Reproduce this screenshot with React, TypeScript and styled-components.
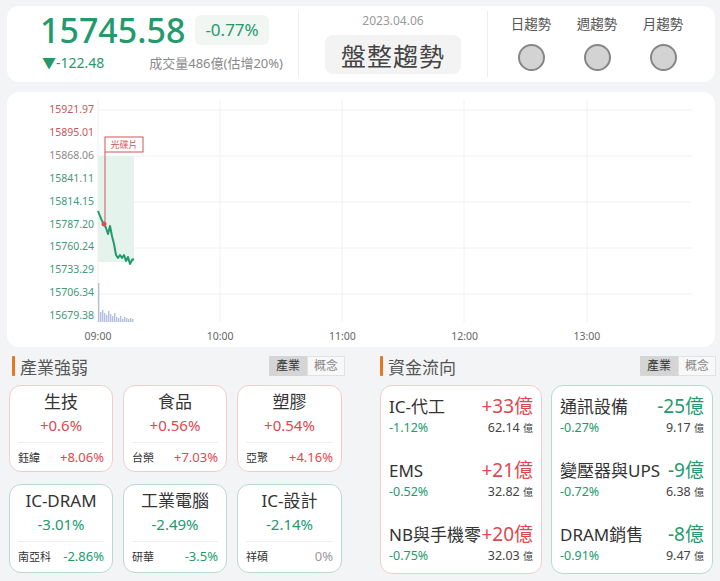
import React from "react";
import styled, { createGlobalStyle } from "styled-components";

const RED = "#e0474f";
const GREEN = "#239a6c";
const GRAY = "#8a8a8a";

const GlobalStyle = createGlobalStyle`
  html, body { margin: 0; padding: 0; background: #f3f4f6; }
  body {
    font-family: "Noto Sans", "Noto Sans CJK TC", sans-serif;
    color: #333;
  }
  * { box-sizing: border-box; }
`;

const Page = styled.div`
  width: 720px;
  height: 581px;
  overflow: hidden;
  padding: 6px 5px 0 7px;
  display: flex;
  flex-direction: column;
  gap: 10px;
`;

const Card = styled.div`
  background: #fff;
  border-radius: 12px;
`;

/* ---------- top summary ---------- */

const Summary = styled(Card)`
  height: 76px;
  display: grid;
  grid-template-columns: 292px 189px 1fr;
  align-items: center;
`;

const Section = styled.div<{ $divider?: boolean }>`
  height: 66px;
  border-right: ${(p) => (p.$divider ? "1px solid #eee" : "none")};
  display: flex;
  flex-direction: column;
`;

const PriceRow = styled.div`
  display: flex;
  align-items: center;
  gap: 10px;
  padding-left: 33px;
  margin-top: 1px;
`;

const BigPrice = styled.div`
  font-size: 34px;
  line-height: 36px;
  color: ${GREEN};
  font-weight: 500;
`;

const PctBadge = styled.div`
  background: #f1f6f3;
  color: ${GREEN};
  border-radius: 6px;
  font-size: 17px;
  height: 30px;
  line-height: 30px;
  padding: 0 10px;
`;

const ChangeRow = styled.div`
  display: flex;
  justify-content: space-between;
  align-items: baseline;
  padding: 0 15px 0 35px;
  margin-top: 4px;
`;

const Change = styled.span`
  color: ${GREEN};
  font-size: 14px;
`;

const Volume = styled.span`
  color: ${GRAY};
  font-size: 13px;
`;

const Middle = styled(Section)`
  align-items: center;
`;

const DateText = styled.div`
  font-size: 12px;
  color: #999;
  line-height: 16px;
  margin-top: 2px;
`;

const TrendBadge = styled.div`
  margin-top: 6px;
  background: #f3f3f3;
  border-radius: 8px;
  height: 39px;
  width: 136px;
  display: flex;
  align-items: center;
  justify-content: center;
  font-size: 25px;
  letter-spacing: 1px;
  color: #444;
`;

const Trends = styled.div`
  display: flex;
  gap: 24px;
  padding-left: 22px;
  height: 66px;
`;

const TrendItem = styled.div`
  width: 42px;
  display: flex;
  flex-direction: column;
  align-items: center;
`;

const TrendLabel = styled.div`
  font-size: 13.5px;
  color: #555;
  line-height: 20px;
  margin-top: 3px;
  white-space: nowrap;
`;

const Light = styled.div`
  width: 27px;
  height: 27px;
  border-radius: 50%;
  background: #d3d3d3;
  border: 2px solid #868686;
  margin-top: 10px;
`;

/* ---------- chart ---------- */

const ChartCard = styled(Card)`
  height: 255px;
`;

const priceLabels = [
  "15921.97",
  "15895.01",
  "15868.06",
  "15841.11",
  "15814.15",
  "15787.20",
  "15760.24",
  "15733.29",
  "15706.34",
  "15679.38",
];

const times = ["09:00", "10:00", "11:00", "12:00", "13:00"];

const linePts: [number, number][] = [
  [98, 211], [100, 216], [102, 221], [104, 224], [106, 228], [108, 234],
  [110, 226], [112, 236], [114, 244], [116, 255], [118, 258], [120, 255],
  [122, 258], [124, 255], [126, 261], [128, 257], [130, 264], [132, 260], [134, 259],
];

const volumes = [39, 10, 12, 9, 7, 11, 8, 6, 9, 5, 4, 6, 3, 5, 4, 3, 4, 3];

function Chart() {
  const ox = 7;
  const oy = 92;
  const pts = linePts.map(([x, y]) => `${x - ox},${y - oy}`).join(" ");
  return (
    <svg width="708" height="255" viewBox="0 0 708 255">
      {[18, 64, 110, 156, 202].map((y) => (
        <line key={y} x1="91" x2="685" y1={y} y2={y} stroke="#f0f0f0" />
      ))}
      {[91, 213, 335, 457, 580].map((x) => (
        <line key={x} x1={x} x2={x} y1="8" y2="230" stroke="#f0f0f0" />
      ))}
      {priceLabels.map((t, i) => (
        <text
          key={t}
          x="87"
          y={17.3 + i * 22.9 + 3.7}
          textAnchor="end"
          fontSize="10.5"
          fill={i < 2 ? "#c9545a" : i === 2 ? "#8a8a8a" : "#3f9a7a"}
        >
          {t}
        </text>
      ))}
      {times.map((t, i) => (
        <text
          key={t}
          x={91 + i * 122.2}
          y="248"
          textAnchor="middle"
          fontSize="10.5"
          fill="#666"
        >
          {t}
        </text>
      ))}
      <rect x="91" y="64" width="36" height="106" fill="#e4f4ed" />
      {volumes.map((h, i) => (
        <rect
          key={i}
          x={91 + i * 2}
          y={230 - h}
          width="1.4"
          height={h}
          fill="#b3bfdc"
        />
      ))}
      <line x1="98" x2="98" y1="60" y2="132" stroke="#d0555a" strokeWidth="1" />
      <rect x="98" y="45" width="38" height="15" fill="#fff" stroke="#d0555a" />
      <text x="117" y="56" textAnchor="middle" fontSize="9" fill="#d0555a">
        光碟片
      </text>
      <polyline points={pts} fill="none" stroke={GREEN} strokeWidth="2" strokeLinejoin="round" />
      <circle cx="97" cy="132" r="2.5" fill="#d0555a" />
    </svg>
  );
}

/* ---------- bottom panels ---------- */

const Bottom = styled.div`
  display: grid;
  grid-template-columns: 333px 333px;
  column-gap: 38px;
  padding-left: 2px;
  margin-top: -2px;
`;

const Column = styled.div`
  display: flex;
  flex-direction: column;
`;

const HeadRow = styled.div<{ $indent?: boolean }>`
  display: flex;
  justify-content: space-between;
  align-items: center;
  height: 22px;
  padding-left: ${(p) => (p.$indent ? "3px" : "0")};
  margin-bottom: 8px;
`;

const Heading = styled.div`
  display: flex;
  align-items: center;
  gap: 5px;
  font-size: 17px;
  color: #555;
  &::before {
    content: "";
    width: 3px;
    height: 20px;
    border-radius: 1px;
    background: #e8771f;
  }
`;

const Toggle = styled.div`
  display: flex;
  height: 20px;
  margin-right: -3px;
`;

const ToggleBtn = styled.div<{ $active?: boolean }>`
  width: 38px;
  font-size: 12px;
  line-height: 18px;
  text-align: center;
  color: ${(p) => (p.$active ? "#333" : "#888")};
  background: ${(p) => (p.$active ? "#d5d5d5" : "#f8f8f8")};
  border: 1px solid ${(p) => (p.$active ? "#d5d5d5" : "#e2e2e2")};
`;

const Tiles = styled.div`
  display: grid;
  grid-template-columns: 104px 104px 105px;
  grid-template-rows: 87px 89px;
  column-gap: 10px;
  row-gap: 12px;
`;

const Tile = styled.div<{ $up: boolean }>`
  background: #fff;
  border: 1.5px solid ${(p) => (p.$up ? "#f2cccc" : "#b9d9cd")};
  border-radius: 12px;
  padding: 4px 8px 0;
  display: flex;
  flex-direction: column;
  align-items: stretch;
`;

const TileTitle = styled.div`
  text-align: center;
  font-size: 17px;
  line-height: 24px;
  color: #333;
`;

const TilePct = styled.div<{ $up: boolean }>`
  text-align: center;
  font-size: 15px;
  line-height: 22px;
  color: ${(p) => (p.$up ? RED : GREEN)};
  padding-bottom: 6px;
  border-bottom: 1px solid #eee;
`;

const TileFoot = styled.div`
  display: flex;
  justify-content: space-between;
  align-items: baseline;
  margin-top: 5px;
`;

const StockName = styled.span`
  font-size: 11px;
  color: #333;
`;

const StockPct = styled.span<{ $color: string }>`
  font-size: 13px;
  color: ${(p) => p.$color};
`;

const FlowCards = styled.div`
  display: grid;
  grid-template-columns: 162px 162px;
  column-gap: 9px;
`;

const FlowCard = styled.div<{ $up: boolean }>`
  height: 189px;
  background: #fff;
  border: 1.5px solid ${(p) => (p.$up ? "#f2cccc" : "#b9d9cd")};
  border-radius: 12px;
  padding: 7px 8px 0 8px;
  display: flex;
  flex-direction: column;
  gap: 20px;
`;

const FlowRow = styled.div`
  display: flex;
  flex-direction: column;
`;

const FlowTop = styled.div`
  display: flex;
  align-items: baseline;
  height: 26px;
  line-height: 26px;
`;

const FlowName = styled.div`
  flex: 1;
  min-width: 0;
  overflow: hidden;
  white-space: nowrap;
  font-size: 17px;
  color: #333;
`;

const FlowValue = styled.div<{ $up: boolean }>`
  font-size: 19px;
  color: ${(p) => (p.$up ? RED : GREEN)};
  white-space: nowrap;
`;

const FlowBottom = styled.div`
  display: flex;
  justify-content: space-between;
  font-size: 12.5px;
  line-height: 18px;
`;

const FlowPct = styled.span`
  color: ${GREEN};
`;

const FlowAmt = styled.span`
  color: #444;
  small {
    font-size: 10px;
  }
`;

const tiles = [
  { title: "生技", pct: "+0.6%", stock: "鈺緯", sp: "+8.06%", up: true, sc: RED },
  { title: "食品", pct: "+0.56%", stock: "台榮", sp: "+7.03%", up: true, sc: RED },
  { title: "塑膠", pct: "+0.54%", stock: "亞聚", sp: "+4.16%", up: true, sc: RED },
  { title: "IC-DRAM", pct: "-3.01%", stock: "南亞科", sp: "-2.86%", up: false, sc: GREEN },
  { title: "工業電腦", pct: "-2.49%", stock: "研華", sp: "-3.5%", up: false, sc: GREEN },
  { title: "IC-設計", pct: "-2.14%", stock: "祥碩", sp: "0%", up: false, sc: "#999" },
];

const inflow = [
  { name: "IC-代工", value: "+33億", pct: "-1.12%", amt: "62.14" },
  { name: "EMS", value: "+21億", pct: "-0.52%", amt: "32.82" },
  { name: "NB與手機零組件", value: "+20億", pct: "-0.75%", amt: "32.03" },
];

const outflow = [
  { name: "通訊設備", value: "-25億", pct: "-0.27%", amt: "9.17" },
  { name: "變壓器與UPS", value: "-9億", pct: "-0.72%", amt: "6.38" },
  { name: "DRAM銷售", value: "-8億", pct: "-0.91%", amt: "9.47" },
];

function Flow({ rows, up }: { rows: typeof inflow; up: boolean }) {
  return (
    <FlowCard $up={up}>
      {rows.map((r) => (
        <FlowRow key={r.name}>
          <FlowTop>
            <FlowName>{r.name}</FlowName>
            <FlowValue $up={up}>{r.value}</FlowValue>
          </FlowTop>
          <FlowBottom>
            <FlowPct>{r.pct}</FlowPct>
            <FlowAmt>
              {r.amt} <small>億</small>
            </FlowAmt>
          </FlowBottom>
        </FlowRow>
      ))}
    </FlowCard>
  );
}

export default function App() {
  return (
    <>
      <GlobalStyle />
      <Page>
        <Summary>
          <Section $divider>
            <PriceRow>
              <BigPrice>15745.58</BigPrice>
              <PctBadge>-0.77%</PctBadge>
            </PriceRow>
            <ChangeRow>
              <Change>▼-122.48</Change>
              <Volume>成交量486億(估增20%)</Volume>
            </ChangeRow>
          </Section>
          <Middle $divider>
            <DateText>2023.04.06</DateText>
            <TrendBadge>盤整趨勢</TrendBadge>
          </Middle>
          <Trends>
            {["日趨勢", "週趨勢", "月趨勢"].map((t) => (
              <TrendItem key={t}>
                <TrendLabel>{t}</TrendLabel>
                <Light />
              </TrendItem>
            ))}
          </Trends>
        </Summary>

        <ChartCard>
          <Chart />
        </ChartCard>

        <Bottom>
          <Column>
            <HeadRow $indent>
              <Heading>產業強弱</Heading>
              <Toggle>
                <ToggleBtn $active>產業</ToggleBtn>
                <ToggleBtn>概念</ToggleBtn>
              </Toggle>
            </HeadRow>
            <Tiles>
              {tiles.map((t) => (
                <Tile key={t.title} $up={t.up}>
                  <TileTitle>{t.title}</TileTitle>
                  <TilePct $up={t.up}>{t.pct}</TilePct>
                  <TileFoot>
                    <StockName>{t.stock}</StockName>
                    <StockPct $color={t.sc}>{t.sp}</StockPct>
                  </TileFoot>
                </Tile>
              ))}
            </Tiles>
          </Column>
          <Column>
            <HeadRow>
              <Heading>資金流向</Heading>
              <Toggle>
                <ToggleBtn $active>產業</ToggleBtn>
                <ToggleBtn>概念</ToggleBtn>
              </Toggle>
            </HeadRow>
            <FlowCards>
              <Flow rows={inflow} up />
              <Flow rows={outflow} up={false} />
            </FlowCards>
          </Column>
        </Bottom>
      </Page>
    </>
  );
}
